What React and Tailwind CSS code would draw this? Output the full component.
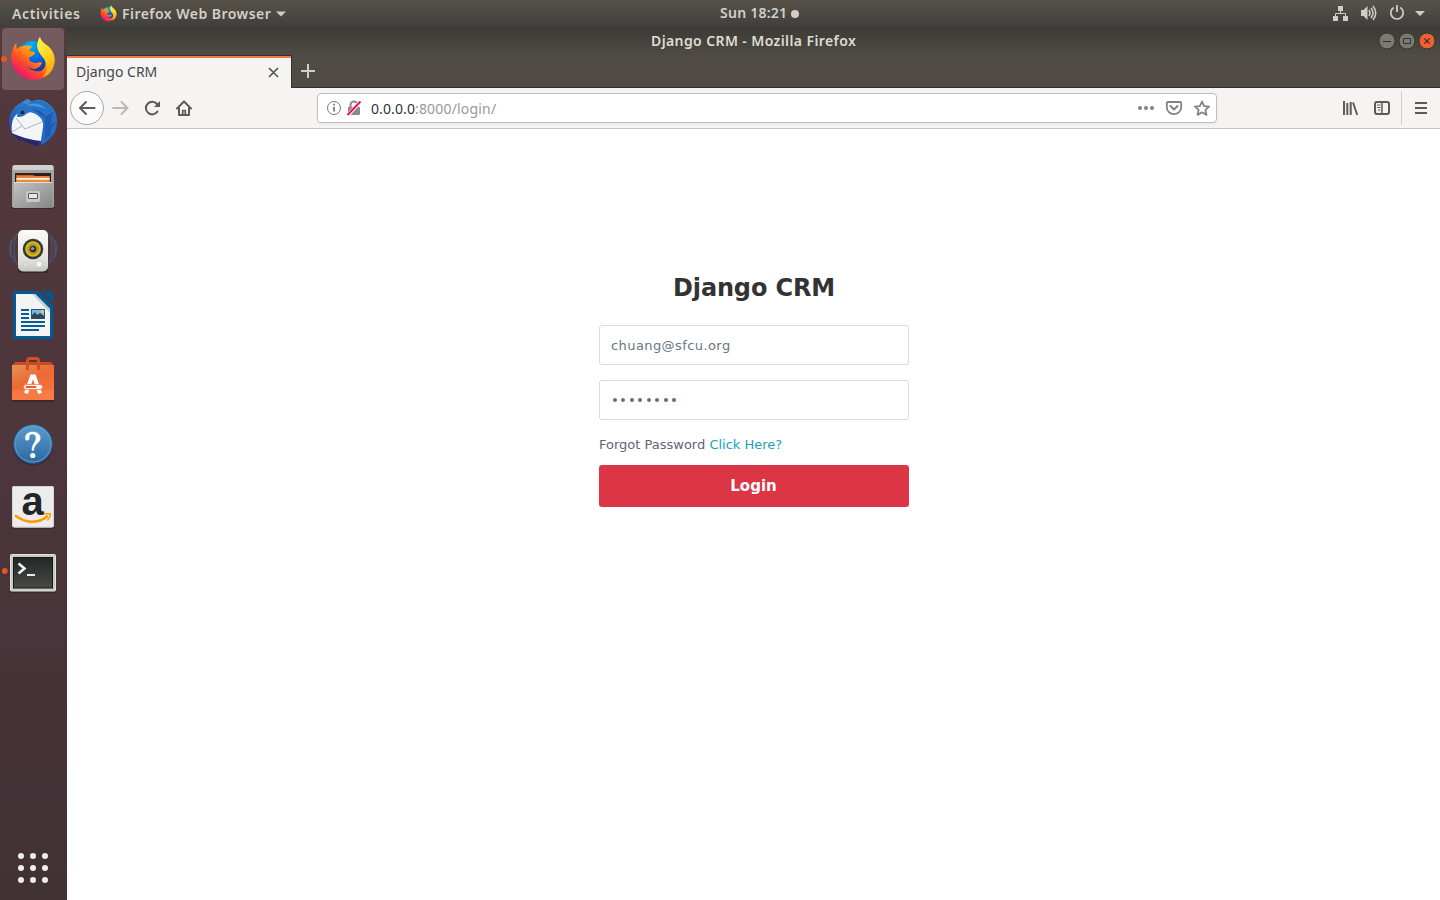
import React from "react";

const ui = "font-['Noto_Sans','Open_Sans',sans-serif]";

function FirefoxLogo({ id, className }) {
  return (
    <svg viewBox="0 0 46 46" className={className}>
      <defs>
        <linearGradient id={id + "a"} x1="0.85" y1="0.1" x2="0.15" y2="0.9">
          <stop offset="0" stopColor="#ffe226" />
          <stop offset="0.35" stopColor="#ff9a12" />
          <stop offset="0.65" stopColor="#ff4a2a" />
          <stop offset="1" stopColor="#e3107c" />
        </linearGradient>
        <radialGradient id={id + "b"} cx="0.45" cy="0.1" r="0.95">
          <stop offset="0" stopColor="#00b4f5" />
          <stop offset="0.5" stopColor="#0060df" />
          <stop offset="1" stopColor="#2b1a78" />
        </radialGradient>
        <linearGradient id={id + "c"} x1="0.3" y1="0" x2="0.6" y2="1">
          <stop offset="0" stopColor="#fff44a" />
          <stop offset="0.5" stopColor="#ffd41c" />
          <stop offset="1" stopColor="#ff9f0c" />
        </linearGradient>
      </defs>
      <circle cx="23" cy="23" r="18" fill={"url(#" + id + "b)"} />
      <path d="M6.500 7C6 10 6.500 12 7 13C9 11 11 10 13 10C16 9 20 10 22 10L19 15C22 16 25 15 25 17C24 20 21 20 19 22C19 26 22 26 25 27C28 27 30 25 32 27C31 30 28 32 25 33C21 33 18 31 17 29C19 34 25 36 31 35C36 32 36 27 35 22L41 14C46 23 45 32 39 38C31 46 15 46 7 37C0 29 0 20 3 13C4 10 5 8 6.500 7Z" fill={"url(#" + id + "a)"} />
      <path d="M30 1C31 5 34 7 38 10C44 15 46 23 44 29C42 35 39 39 33 41C38 35 38 29 34 23C30 18 25 12 28 5C28.500 3 29 2 30 1Z" fill={"url(#" + id + "c)"} />
    </svg>
  );
}

function DockTile({ children, viewBox }) {
  return (
    <svg className="block h-16 w-[67px] shrink-0" viewBox={viewBox}>
      {children}
    </svg>
  );
}

function Thunderbird() {
  return (
    <DockTile viewBox="0 91 67 64">
      <defs>
        <linearGradient id="tb" x1="0.7" y1="0" x2="0.3" y2="1">
          <stop offset="0" stopColor="#2f86d8" />
          <stop offset="0.55" stopColor="#2163bd" />
          <stop offset="1" stopColor="#2b2b86" />
        </linearGradient>
      </defs>
      <path d="M27 99C24 101 19 103 15 107C9 113 8 122 10 129C12 135 16 139 21 142L20 138C25 142 30 144 37 146L36 144C41 146 43 145 45 143C50 140 54 136 56 129C58 121 57 113 52 107C47 101 39 98 33 101C31 102 29 101 30 100Z" fill="url(#tb)" />
      <path d="M11 132L21 142L20 138C26 143 32 145 38 146L40 140Z" fill="#2d2368" />
      <path d="M15 116C20 110 27 110 33 112L44 120L41 141C31 140 20 137 12 133C11 126 12 120 15 116Z" fill="#f4f5f7" />
      <path d="M16 118L25 129L43 121.500M12 132L22 126" fill="none" stroke="#a9adb8" strokeWidth="0.900" />
      <path d="M17 117C17 109 24 102 34 101C46 99 56 108 56 120C56 131 50 140 41 145C43 138 44 131 43 123C42 118 38 114 33 113C30 111 27 113 25 115C22 117 20 117 17 117Z" fill="#2672c8" />
      <path d="M45 117L53 112L51 124L56 122L50 132L52 133L44 141C46 135 44 131 45 126Z" fill="#1e5cb0" />
      <path d="M26 106C32 102 41 103 46 109C40 107 33 105 26 106Z" fill="#4296e0" />
      <path d="M33 109C39 110 44 113 46 118C43 116 38 113 33 109Z" fill="#1b549f" />
      <circle cx="22.500" cy="112.500" r="1.900" fill="#212a45" />
      <path d="M28 99L22 103L28 104.500L31 101Z" fill="#4a86b8" />
    </DockTile>
  );
}

function Files() {
  return (
    <DockTile viewBox="0 155 67 64">
      <defs>
        <linearGradient id="fi" x1="0" y1="0" x2="1" y2="1">
          <stop offset="0" stopColor="#c4c4c4" />
          <stop offset="1" stopColor="#858585" />
        </linearGradient>
      </defs>
      <rect x="12" y="205" width="42" height="4" rx="1" fill="#251c1e" opacity="0.55" />
      <path d="M12 168Q12 165 15 165H51Q54 165 54 168V207H12Z" fill="#a4a4a4" />
      <rect x="13" y="165" width="40" height="5" rx="1.500" fill="#d0d0ce" />
      <rect x="15" y="173" width="36" height="12" fill="#2c211c" />
      <path d="M16 175H33L35 176H50V185H16Z" fill="#d55f1c" />
      <rect x="17" y="176.500" width="32" height="1" fill="#f2a268" />
      <rect x="16.500" y="178" width="33" height="1.800" fill="#fff3e4" />
      <rect x="16.500" y="180" width="33" height="2" fill="#f08a35" />
      <path d="M14 182H52L53 208H13Z" fill="url(#fi)" />
      <path d="M14 182.500H52" stroke="#dedede" />
      <rect x="26" y="191" width="14" height="11" rx="2" fill="#c9c9c9" />
      <rect x="28.500" y="193.500" width="9" height="5" rx="0.500" fill="#e8e8e8" stroke="#555" />
    </DockTile>
  );
}

function Rhythmbox() {
  return (
    <DockTile viewBox="0 219 67 64">
      <defs>
        <linearGradient id="rb" x1="0" y1="0" x2="0" y2="1">
          <stop offset="0" stopColor="#fbfbfa" />
          <stop offset="0.75" stopColor="#dededb" />
          <stop offset="1" stopColor="#c4c4c1" />
        </linearGradient>
      </defs>
      <g fill="none" stroke="#4c6494" strokeWidth="1.400" opacity="0.55">
        <path d="M17 233Q11 248 17 265M14 236Q8 249 14 262M11 240Q8 249 11 257" />
        <path d="M49 233Q55 248 49 265M52 236Q58 249 52 262M55 240Q58 249 55 257" />
      </g>
      <rect x="18" y="266" width="30" height="7" rx="3" fill="#241a1e" opacity="0.6" />
      <rect x="18" y="230" width="30" height="41.500" rx="5" fill="url(#rb)" />
      <circle cx="33" cy="249" r="10.300" fill="#36383a" />
      <circle cx="33" cy="249" r="7.800" fill="#d9b81f" />
      <circle cx="33" cy="249" r="5" fill="none" stroke="#957c15" strokeWidth="0.900" />
      <circle cx="33" cy="249" r="3.500" fill="#303234" />
      <circle cx="32.500" cy="248.500" r="1.600" fill="#9b9c98" />
      <circle cx="25.500" cy="264.500" r="2.300" fill="#dededa" stroke="#d0d0cc" />
      <rect x="36" y="261" width="6" height="6" rx="2" fill="#f8f8f6" stroke="#c9c9c6" />
    </DockTile>
  );
}

function Writer() {
  return (
    <DockTile viewBox="0 283 67 64">
      <path d="M15 291H38L53 306V337Q53 339 51 339H15Q13 339 13 337V293Q13 291 15 291Z" fill="#005a94" />
      <path d="M41 291H53V303Z" fill="#07568a" />
      <path d="M16 294H35L50 309V336H16Z" fill="#f4f4f4" />
      <path d="M35 294L50 309V313L32 294Z" fill="#c9d0d4" />
      <g fill="#0b5c90">
        <rect x="21" y="309" width="8" height="2" />
        <rect x="21" y="313" width="8" height="2" />
        <rect x="21" y="317" width="8" height="2" />
        <rect x="21" y="321" width="24" height="2" />
        <rect x="21" y="325" width="24" height="2" />
        <rect x="21" y="329" width="18" height="2" />
      </g>
      <rect x="31.500" y="309.500" width="13" height="9" fill="#7ab9df" stroke="#0b5c90" strokeWidth="1" />
      <circle cx="42.500" cy="311.500" r="1.800" fill="#e7c453" />
      <path d="M32 318V315L35 312L37 315L40 313L44 316V318.500H32Z" fill="#36454c" />
    </DockTile>
  );
}

function Software() {
  return (
    <DockTile viewBox="0 347 67 64">
      <defs>
        <linearGradient id="sw" x1="0" y1="0" x2="0.6" y2="1">
          <stop offset="0" stopColor="#e2935b" />
          <stop offset="0.5" stopColor="#ec6a33" />
          <stop offset="1" stopColor="#f4753f" />
        </linearGradient>
      </defs>
      <path d="M12 400H54V402H14Z" fill="#251a1e" opacity="0.5" />
      <path d="M15 362H51L54 366H12Z" fill="#c64b1f" />
      <rect x="12" y="365" width="42" height="35" fill="url(#sw)" />
      <rect x="12" y="390" width="42" height="10" fill="#ff8650" opacity="0.45" />
      <path d="M27.500 370V361Q27.500 358.500 30 358.500H36Q38.500 358.500 38.500 361V370" fill="none" stroke="#d4501f" strokeWidth="3" />
      <path d="M26 393.300L31.800 376.500H34.200L40 393.300" fill="none" stroke="#fff" strokeWidth="4" />
      <rect x="23.500" y="384.500" width="19" height="5" rx="2.500" fill="#fff" stroke="#ee7038" strokeWidth="0.700" />
      <rect x="25.500" y="386" width="11" height="2" rx="1" fill="#e8601f" />
    </DockTile>
  );
}

function Help() {
  return (
    <DockTile viewBox="0 411 67 64">
      <defs>
        <linearGradient id="hp" x1="0" y1="0" x2="0" y2="1">
          <stop offset="0" stopColor="#5e9bcb" />
          <stop offset="1" stopColor="#2b68a3" />
        </linearGradient>
      </defs>
      <circle cx="33" cy="445.500" r="20" fill="#281d25" opacity="0.4" />
      <circle cx="33" cy="444" r="19.300" fill="url(#hp)" stroke="#255a8e" />
      <circle cx="33" cy="444" r="18" fill="none" stroke="#6aa6d5" strokeWidth="0.800" />
      <path d="M25.500 439C25 434 28.500 432 32.500 432C37.500 432 40.200 434.500 40.200 438C40.200 443 34 443.500 33.600 450.500H32C31.800 444 36 442.500 36 438C36 435.500 34.800 434 32.300 434C29.500 434 28.800 435.500 29.200 438.500C29 440.500 25.800 441 25.500 439Z" fill="#fff" stroke="#fff" strokeWidth="0.500" />
      <circle cx="32.800" cy="455.500" r="2.600" fill="#fff" />
    </DockTile>
  );
}

function Amazon() {
  return (
    <DockTile viewBox="0 475 67 64">
      <rect x="12" y="487" width="42" height="42" rx="2" fill="#251b22" opacity="0.5" />
      <rect x="12" y="486" width="42" height="41.500" rx="2" fill="#ececec" />
      <rect x="12.500" y="486.500" width="41" height="40.500" rx="2" fill="none" stroke="#d4d4d4" />
      <text x="32.500" y="514.500" textAnchor="middle" fontSize="40" fontWeight="700" fill="#222527" className="font-['Liberation_Sans',sans-serif]">a</text>
      <path d="M16 516C25 523 38 524 47 516.500" fill="none" stroke="#ff9900" strokeWidth="2.600" strokeLinecap="round" />
      <path d="M44.500 514C47 513.200 49 513.200 50.500 514C50.500 516 49.500 518 47.800 520" fill="none" stroke="#ff9900" strokeWidth="1.500" strokeLinecap="round" />
    </DockTile>
  );
}

function Terminal() {
  return (
    <DockTile viewBox="0 541 67 64">
      <defs>
        <linearGradient id="tm" x1="0" y1="0" x2="0" y2="1">
          <stop offset="0" stopColor="#232624" />
          <stop offset="1" stopColor="#484a48" />
        </linearGradient>
      </defs>
      <circle cx="4.800" cy="571" r="2.900" fill="#e95420" />
      <rect x="10" y="555" width="46" height="38" rx="1.500" fill="#22191e" opacity="0.5" />
      <rect x="10.500" y="554.500" width="45" height="36.500" rx="1" fill="#c9c9c7" stroke="#e1e1df" />
      <rect x="13.500" y="557.500" width="39" height="30.500" fill="url(#tm)" stroke="#151715" />
      <path d="M18.500 563.500L24.500 568.500L18.500 573.500" fill="none" stroke="#eee" strokeWidth="2.600" />
      <rect x="27" y="574" width="8" height="2" fill="#e8e8e8" />
    </DockTile>
  );
}

function Dock() {
  return (
    <aside className="flex w-[67px] shrink-0 flex-col bg-linear-to-b from-[#54393c] via-[#4c353c] to-[#413236]">
      <div className="flex h-16 shrink-0 items-center pb-px pl-[2px]">
        <div className="flex h-[62px] w-[62px] items-center rounded-[4px] bg-[#735b5f]">
          <div className="-ml-px h-[6px] w-[6px] shrink-0 rounded-full bg-[#e95420]" />
          <FirefoxLogo id="ffd" className="ml-[3px] h-[46px] w-[46px]" />
        </div>
      </div>
      <Thunderbird />
      <Files />
      <Rhythmbox />
      <Writer />
      <Software />
      <Help />
      <Amazon />
      <div className="h-[2px] shrink-0" />
      <Terminal />
      <div className="mt-auto grid grid-cols-3 gap-[6px] self-start pb-[17px] pl-[18px]">
        {Array.from({ length: 9 }, (_, i) => (
          <span key={i} className="h-[6px] w-[6px] rounded-full bg-[#f0f0ef]" />
        ))}
      </div>
    </aside>
  );
}

function TopBar() {
  return (
    <header className={"grid h-[27px] shrink-0 grid-cols-[1fr_auto_1fr] items-center bg-linear-to-b from-[#57534a] to-[#403f3a] text-[14px] leading-[27px] font-semibold text-[#d3d0c9] " + ui}>
      <div className="flex items-center pl-[12px]">
        <span className="w-[88px] tracking-[0.6px]">Activities</span>
        <FirefoxLogo id="fft" className="h-[17px] w-[17px]" />
        <span className="ml-[5px] w-[149px] tracking-[0.47px] whitespace-nowrap">Firefox Web Browser</span>
        <svg className="ml-[5px] h-[6px] w-[10px]" viewBox="0 0 10 6"><path d="M0 0.500H10L5 5.500Z" fill="#d0cdc6" /></svg>
      </div>
      <div className="flex items-center pl-[79px]">
        <span className="w-[71px] pb-[2px] leading-[25px] tracking-[0.25px] whitespace-nowrap">Sun 18:21</span>
        <span className="h-2 w-2 rounded-full bg-[#d0cfcc]" />
      </div>
      <div className="flex items-center justify-end pr-[15px]">
        <svg className="h-[27px] w-[92px]" viewBox="1333 0 92 27" fill="#d0cdc7">
          <path d="M1338 6h5v5h-5zM1333 16h5v5h-5zM1343 16h5v5h-5z" />
          <path d="M1340.500 10v3.500M1335.500 17v-3.500h10V17" fill="none" stroke="#d0cdc7" />
          <path d="M1361 10h2.500l4-4v14l-4-4h-2.500z" />
          <g fill="none" stroke="#d0cdc7" strokeWidth="1.500">
            <path d="M1369 10q2 3 0 6M1371 8q4 5 0 10M1373 6q5.500 7 0 14" />
            <path d="M1393.800 7.500a6.200 6.200 0 1 0 6.400 0" strokeWidth="1.700" />
            <path d="M1397 5v7" strokeWidth="1.800" />
          </g>
          <path d="M1415 11h10l-5 5z" />
        </svg>
      </div>
    </header>
  );
}

function WindowControls() {
  return (
    <svg className="h-[20px] w-[60px]" viewBox="1377 31 60 20">
      <circle cx="1387" cy="41" r="8" fill="#7b7973" stroke="#363530" />
      <circle cx="1407" cy="41" r="8" fill="#7b7973" stroke="#363530" />
      <circle cx="1427" cy="41" r="8" fill="#ec6132" stroke="#363530" />
      <path d="M1383 41.500h8M1403.500 38.500h7v5h-7z" fill="none" stroke="#33322e" />
      <path d="M1424.300 38.300l5.400 5.400M1429.700 38.300l-5.400 5.400" stroke="#4a2518" strokeWidth="1.200" />
    </svg>
  );
}

function TabStrip() {
  return (
    <div className="flex h-[33px] items-stretch bg-[#504c45]">
      <div className={"flex w-[225px] items-center justify-between border-t border-r border-[#33312c] bg-[#f5f4f2] text-[14px] text-[#46484a] " + ui}>
        <div className="flex h-full w-full items-center justify-between border-t-2 border-[#ee7b4f] pr-[12px] pl-[9px]">
          <span className="pb-[3px]">Django CRM</span>
          <svg className="mb-[2px] h-[11px] w-[11px]" viewBox="0 0 11 11"><path d="M1 1l9 9M10 1l-9 9" stroke="#55585a" strokeWidth="1.700" /></svg>
        </div>
      </div>
      <div className="flex flex-1 items-center border-b border-[#33312c] pl-[9px]">
        <svg className="h-[14px] w-[14px]" viewBox="0 0 14 14"><path d="M7 0v14M0 7h14" stroke="#d0cec9" strokeWidth="2" /></svg>
      </div>
    </div>
  );
}

function Toolbar() {
  return (
    <div className="flex h-[41px] items-center border-b border-[#c9c6c2] bg-[#f5f4f2]">
      <svg className="h-[40px] w-[130px]" viewBox="67 88 130 40" fill="none" stroke="#5c5b59" strokeWidth="2" strokeLinecap="round" strokeLinejoin="round">
        <circle cx="87" cy="108" r="16.500" fill="#fcfcfc" stroke="#aaa8a5" strokeWidth="1" />
        <path d="M94.500 108h-14M86 102l-6 6l6 6" />
        <path d="M113 108h14M121.500 102l6 6l-6 6" stroke="#bab9b7" />
        <path d="M157.500 111.500a6.300 6.300 0 1 1 -0.500 -7.500" />
        <path d="M160 101v6h-6z" fill="#5c5b59" stroke="none" />
        <path d="M177 108.500l7-7l7 7M179 108v7h10v-7" />
        <path d="M182.700 115v-4.500h2.600v4.500" strokeWidth="1.700" />
      </svg>
      <div className={"ml-[120px] flex h-[30px] w-[900px] items-center rounded-[4px] border border-[#c1bfbc] bg-white text-[14px] shadow-sm shadow-black/5 " + ui}>
        <svg className="ml-[8px] h-[20px] w-[38px]" viewBox="326 98 38 20">
          <circle cx="334" cy="108" r="6.500" fill="none" stroke="#7b7b7b" />
          <path d="M334 107v4.500M334 103.800v1.700" stroke="#737373" strokeWidth="1.700" />
          <path d="M350.500 107v-2a3.500 3.500 0 0 1 7 0v2" fill="none" stroke="#8a8a8a" strokeWidth="2" />
          <rect x="348" y="107" width="12" height="8" rx="1" fill="#8a8a8a" />
          <path d="M347.500 115.500l13-14" stroke="#fff" strokeWidth="3.600" />
          <path d="M347.500 115l13-13.500" stroke="#f80f4b" strokeWidth="2" />
        </svg>
        <div className="ml-[7px] flex-1 whitespace-nowrap text-[#999]">
          <span className="tracking-[0.1px] text-[#2e3436]">0.0.0.0</span><span className="tracking-[0.18px]">:8000/login/</span>
        </div>
        <svg className="mr-[5px] h-[24px] w-[74px]" viewBox="1137 96 74 24" fill="none" stroke="#84817e" strokeWidth="1.800">
          <g fill="#84817e" stroke="none">
            <circle cx="1140" cy="108" r="2" /><circle cx="1146" cy="108" r="2" /><circle cx="1152" cy="108" r="2" />
          </g>
          <path d="M1168 102h12q1.200 0 1.200 1.200v4a7.200 7 0 0 1-14.400 0v-4q0-1.200 1.200-1.200z" />
          <path d="M1170.500 106l3.500 3.500l3.500-3.500" strokeWidth="2" strokeLinecap="round" strokeLinejoin="round" />
          <path d="M1202 101.500l2.100 4.600l5 0.500l-3.700 3.300l1.100 5l-4.500-2.600l-4.500 2.600l1.100-5l-3.700-3.300l5-0.500z" strokeLinejoin="round" />
        </svg>
      </div>
      <svg className="ml-auto h-[40px] w-[100px]" viewBox="1340 88 100 40" fill="none" stroke="#5d5b58" strokeWidth="2">
        <path d="M1344 101v14M1347.300 103v12M1350.700 102v13" strokeWidth="2" />
        <path d="M1353 102.500l4.300 12.500" strokeWidth="1.900" />
        <rect x="1375" y="102" width="14" height="12" rx="2" />
        <path d="M1382 102v12" strokeWidth="1.500" />
        <path d="M1377 105h3.500M1377 107.500h3.500M1378 110h2.500" strokeWidth="1" />
        <path d="M1401.500 91v34" stroke="#d2d0cd" strokeWidth="1" />
        <path d="M1415 103h12M1415 108h12M1415 113h12" />
      </svg>
    </div>
  );
}

function LoginPage() {
  return (
    <main className="flex flex-1 flex-col items-center bg-white pl-px font-['DejaVu_Sans',sans-serif] text-[13px]">
      <form className="mt-[143px] flex w-[310px] flex-col" onSubmit={(e) => e.preventDefault()}>
        <h1 className="text-center text-[24px] leading-[32px] font-bold tracking-[-0.15px] text-[#333]">Django CRM</h1>
        <input type="text" defaultValue="chuang@sfcu.org" className="mt-[21px] h-[40px] rounded-[3px] border border-[#dcdcdc] px-[11px] tracking-[0.42px] text-[#667683] outline-none" />
        <div className="mt-[15px] flex h-[40px] items-center gap-[4.500px] rounded-[3px] border border-[#dcdcdc] px-[12.500px]">
          {Array.from({ length: 8 }, (_, i) => (
            <span key={i} className="h-[4px] w-[4px] rounded-full bg-[#5f7081]" />
          ))}
        </div>
        <p className="mt-[15px] leading-[20px] text-[#5f6477]">
          Forgot Password <a href="#" className="text-[#17a2b8]">Click Here?</a>
        </p>
        <button className="mt-[10px] h-[42px] rounded-[3px] bg-[#dc3545] pr-px text-[15px] font-bold text-white">Login</button>
      </form>
    </main>
  );
}

export default function App() {
  return (
    <div className="flex h-screen w-screen flex-col overflow-hidden bg-[#3c3b37]">
      <TopBar />
      <div className="flex min-h-0 flex-1">
        <Dock />
        <section className="flex min-w-0 flex-1 flex-col">
          <div className="grid h-[28px] grid-cols-[1fr_auto_1fr] items-center bg-linear-to-b from-[#3b3a36] to-[#4f4b44]">
            <span />
            <span className={"w-[205px] pb-[2px] text-[14px] font-semibold tracking-[0.4px] whitespace-nowrap text-[#dfdbd2] " + ui}>Django CRM - Mozilla Firefox</span>
            <div className="flex justify-end pr-[3px]"><WindowControls /></div>
          </div>
          <TabStrip />
          <Toolbar />
          <LoginPage />
        </section>
      </div>
    </div>
  );
}
